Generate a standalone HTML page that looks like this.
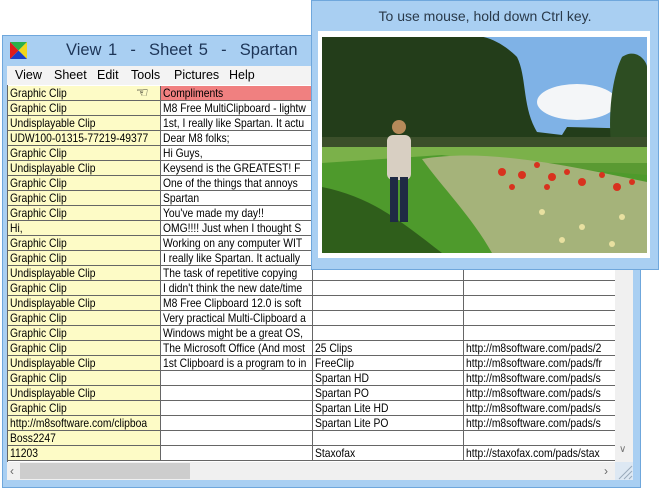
<!DOCTYPE html>
<html><head><meta charset="utf-8"><style>
*{margin:0;padding:0;box-sizing:border-box}
body{width:659px;height:489px;background:#fff;position:relative;overflow:hidden;font-family:"Liberation Sans",Arial,sans-serif}
.win{position:absolute;left:2px;top:35px;width:639px;height:453px;background:#a9cff2;border:1px solid #6fa7dc}
.title{position:absolute;left:66px;top:41px;font-size:16.5px;color:#1d3557;word-spacing:2px}
.menu{position:absolute;left:7px;top:66px;width:626px;height:19px;background:#f3f3f3;font-size:12.5px;color:#000}
.menu span{position:absolute;top:2px}
.grid{position:absolute;left:7px;top:85px;width:626px;height:377px;background:#fff;border-left:1px solid #666}
.c{position:absolute;height:15px;border-right:1px solid #666;border-bottom:1px solid #666;font-size:12px;line-height:14px;padding-left:2px;white-space:nowrap;overflow:hidden}
.c i{font-style:normal;display:inline-block;transform:scaleX(.86);transform-origin:0 0}
.y{background:#fdfbc6}
.vs{position:absolute;left:615px;top:85px;width:18px;height:377px;background:#f0f0f0}
.hs{position:absolute;left:7px;top:462px;width:608px;height:18px;background:#f0f0f0}
.thumb{position:absolute;left:13px;top:1px;width:170px;height:16px;background:#cdcdcd}
.pop{position:absolute;left:311px;top:0;width:348px;height:270px;background:#a9cff2;border:1px solid #6fa7dc}
.ptitle{position:absolute;left:0;width:100%;top:7px;text-align:center;font-size:14px;color:#2a3a4a}
.frame{position:absolute;left:318px;top:31px;width:332px;height:227px;background:#fff}
.photo{position:absolute;left:322px;top:37px;width:325px;height:216px;overflow:hidden;background:#4f8a2c}
</style></head><body>
<div class="win"></div>
<svg style="position:absolute;left:10px;top:42px" width="17" height="17"><polygon points="0,0 17,0 8.5,8.5" fill="#2bb04a"/><polygon points="17,0 17,17 8.5,8.5" fill="#f2d51c"/><polygon points="0,17 17,17 8.5,8.5" fill="#1b3fc8"/><polygon points="0,0 0,17 8.5,8.5" fill="#e01b1b"/></svg>
<div class="title">View 1&nbsp; - &nbsp;Sheet 5&nbsp; - &nbsp;Spartan&nbsp;&nbsp;&nbsp;&nbsp; 4</div>
<div class="menu"><span style="left:8px">View</span><span style="left:47px">Sheet</span><span style="left:90px">Edit</span><span style="left:124px">Tools</span><span style="left:167px">Pictures</span><span style="left:222px">Help</span></div>
<div class="grid" id="g"></div>
<div class="vs"><span style="position:absolute;left:4px;top:359px;font-size:10px;color:#777">&#8744;</span></div>
<div class="hs"><div class="thumb"></div><span style="position:absolute;left:3px;top:2px;font-size:12px;color:#666">&lsaquo;</span><span style="position:absolute;left:597px;top:2px;font-size:12px;color:#666">&rsaquo;</span></div>
<svg style="position:absolute;left:615px;top:462px" width="18" height="18"><rect width="18" height="18" fill="#dde8f3"/><path d="M4 17L17 4M9 17L17 9M14 17L17 14" stroke="#9ab" stroke-width="1"/></svg>
<div class="pop"><div class="ptitle">To use mouse, hold down Ctrl key.</div></div>
<div class="frame"></div>
<div class="photo">
<svg width="325" height="216">
<rect width="325" height="216" fill="#5a9a32"/>
<rect width="325" height="100" fill="#7fb2e6"/>
<ellipse cx="255" cy="65" rx="40" ry="18" fill="#f4f6f8"/>
<path d="M0 0H140C160 -5 180 5 195 20C205 40 200 70 215 95L240 98L245 90L325 92V100L0 110Z" fill="#233d1a"/>
<path d="M300 20C315 10 325 25 325 30V115H290C285 80 290 40 300 20Z" fill="#2d4d22"/>
<rect y="100" width="325" height="12" fill="#3b4f2a"/>
<rect y="110" width="325" height="16" fill="#7bb14a"/>
<path d="M0 126L60 122L120 118L200 128L325 138V216H0Z" fill="#4e9a2c"/>
<path d="M0 150C50 160 80 185 120 216H0Z" fill="#2f5e1b"/>
<path d="M100 122C160 112 230 125 325 145V216H170C150 180 120 150 100 122Z" fill="#a5b37a"/>
<g fill="#d8321e"><circle cx="180" cy="135" r="4"/><circle cx="200" cy="138" r="4"/><circle cx="215" cy="128" r="3"/><circle cx="230" cy="140" r="4"/><circle cx="245" cy="135" r="3"/><circle cx="260" cy="145" r="4"/><circle cx="280" cy="138" r="3"/><circle cx="295" cy="150" r="4"/><circle cx="310" cy="145" r="3"/><circle cx="225" cy="150" r="3"/><circle cx="190" cy="150" r="3"/></g>
<g fill="#e8e0a0"><circle cx="220" cy="175" r="3"/><circle cx="260" cy="190" r="3"/><circle cx="300" cy="180" r="3"/><circle cx="240" cy="203" r="3"/><circle cx="290" cy="207" r="3"/></g>
<rect x="65" y="98" width="24" height="45" rx="6" fill="#d8cfc2"/>
<circle cx="77" cy="90" r="7" fill="#b58a5a"/>
<rect x="68" y="140" width="8" height="45" fill="#1f2a44"/><rect x="78" y="140" width="8" height="45" fill="#1f2a44"/>
</svg></div>
<script>
var c1=["Graphic Clip","Graphic Clip","Undisplayable Clip","UDW100-01315-77219-49377","Graphic Clip","Undisplayable Clip","Graphic Clip","Graphic Clip","Graphic Clip","Hi,","Graphic Clip","Graphic Clip","Undisplayable Clip","Graphic Clip","Undisplayable Clip","Graphic Clip","Graphic Clip","Graphic Clip","Undisplayable Clip","Graphic Clip","Undisplayable Clip","Graphic Clip","http://m8software.com/clipboa","Boss2247","11203"];
var c2=["Compliments","M8 Free MultiClipboard - lightw","1st, I really like Spartan. It actu","Dear M8 folks;","Hi Guys,","Keysend is the GREATEST!  F","One of the things that annoys","Spartan","You've made my day!!","OMG!!!!  Just when I thought S","Working on any computer WIT","I really like Spartan. It actually","The task of repetitive copying","I didn't think the new date/time","M8 Free Clipboard 12.0 is soft","Very practical Multi-Clipboard a","Windows might be a great OS,","The Microsoft Office (And most","1st Clipboard is a program to in"];
var c3={17:"25 Clips",18:"FreeClip",19:"Spartan HD",20:"Spartan PO",21:"Spartan Lite HD",22:"Spartan Lite PO",24:"Staxofax"};
var c4={17:"http://m8software.com/pads/2",18:"http://m8software.com/pads/fr",19:"http://m8software.com/pads/s",20:"http://m8software.com/pads/s",21:"http://m8software.com/pads/s",22:"http://m8software.com/pads/s",24:"http://staxofax.com/pads/stax"};
var h="";
for(var i=0;i<25;i++){var t=1+i*15;
h+='<div class="c y" style="left:0;top:'+t+'px;width:153px"><i>'+c1[i]+'</i></div>';
h+='<div class="c" style="left:153px;top:'+t+'px;width:152px;'+(i==0?'background:#f08080':'')+'"><i>'+(c2[i]||'')+'</i></div>';
h+='<div class="c" style="left:305px;top:'+t+'px;width:151px"><i>'+(c3[i]||'')+'</i></div>';
h+='<div class="c" style="left:456px;top:'+t+'px;width:152px"><i>'+(c4[i]||'')+'</i></div>';}
document.getElementById('g').innerHTML=h;
</script>
<span style="position:absolute;left:136px;top:84px;font-size:14px">&#9756;</span>
</body></html>
